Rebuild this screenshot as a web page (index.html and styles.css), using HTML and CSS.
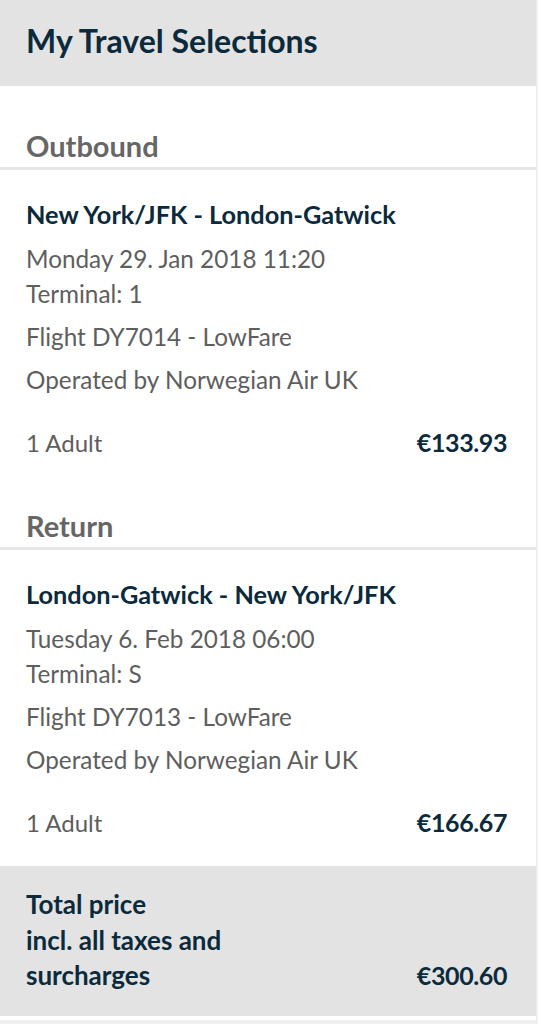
FILE: index.html
```
<!DOCTYPE html>
<html lang="en">
<head>
<meta charset="utf-8">
<title>My Travel Selections</title>
<link rel="stylesheet" href="styles.css">
</head>
<body>
<div class="page">
  <div class="panel">
    <header class="panel-header">
      <h1 class="panel-title">My Travel Selections</h1>
    </header>

    <section class="leg leg-first">
      <h2 class="leg-title">Outbound</h2>
      <div class="leg-card">
        <div class="route">New York/JFK - London-Gatwick</div>
        <div class="info info-date">Monday 29. Jan 2018 11:20</div>
        <div class="info">Terminal: 1</div>
        <div class="info info-wide info-flight">Flight DY7014 - LowFare</div>
        <div class="info info-wide">Operated by Norwegian Air UK</div>
        <div class="price-row">
          <span class="pax">1 Adult</span>
          <span class="price">€133.93</span>
        </div>
      </div>
    </section>

    <section class="leg">
      <h2 class="leg-title">Return</h2>
      <div class="leg-card">
        <div class="route">London-Gatwick - New York/JFK</div>
        <div class="info info-date">Tuesday 6. Feb 2018 06:00</div>
        <div class="info">Terminal: S</div>
        <div class="info info-wide info-flight">Flight DY7013 - LowFare</div>
        <div class="info info-wide">Operated by Norwegian Air UK</div>
        <div class="price-row">
          <span class="pax">1 Adult</span>
          <span class="price">€166.67</span>
        </div>
      </div>
    </section>

    <div class="total">
      <div class="total-label">Total price<br>incl. all taxes and<br>surcharges</div>
      <div class="total-price">€300.60</div>
    </div>
  </div>
  <div class="next"></div>
</div>
</body>
</html>
```

FILE: styles.css
```
html, body {
  margin: 0;
  padding: 0;
  background: #ffffff;
}

body {
  font-family: Lato, "Open Sans", "Liberation Sans", sans-serif;
  color: #5e5e5e;
}

.page {
  width: 538px;
  border-right: 2px solid #efefef;
  min-height: 1024px;
  box-sizing: border-box;
}

.panel {
  width: 536px;
}

.panel-header {
  background: #e3e3e3;
  height: 86px;
  display: flex;
  align-items: center;
  padding: 0 26px;
  box-sizing: border-box;
}

.panel-title {
  margin: 0;
  font-size: 32px;
  line-height: 36px;
  font-weight: 700;
  color: #0b2a3b;
  padding-bottom: 4px;
}

.leg-first {
  margin-top: 20px;
}

.leg-title {
  margin: 0;
  padding: 25px 26px 6px;
  font-size: 29px;
  line-height: 30px;
  font-weight: 700;
  color: #666666;
  border-bottom: 3px solid #e6e6e6;
}

.leg-card {
  padding: 30px 29px 26px 26px;
}

.route {
  font-size: 25.3px;
  line-height: 28px;
  font-weight: 700;
  color: #0b2a3b;
}

.info {
  font-size: 24.3px;
  line-height: 35px;
  color: #5e5e5e;
}

.info-date {
  margin-top: 13px;
}

.info-wide {
  line-height: 43px;
}

.info-flight {
  margin-top: 4px;
}

.price-row {
  display: flex;
  justify-content: space-between;
  align-items: baseline;
  margin-top: 24px;
  font-size: 24px;
  line-height: 35px;
}

.pax {
  color: #5e5e5e;
}

.price {
  font-size: 25px;
  font-weight: 700;
  letter-spacing: -0.4px;
  color: #0b2a3b;
}

.total {
  background: #e3e3e3;
  display: flex;
  justify-content: space-between;
  align-items: flex-end;
  padding: 21px 29px 22px 26px;
  font-size: 26px;
  line-height: 35.5px;
  font-weight: 700;
  color: #0b2a3b;
}

.total-price {
  font-size: 25px;
  letter-spacing: -0.4px;
}

.next {
  margin-top: 4px;
  width: 536px;
  height: 6px;
  background: #efefef;
}
```
